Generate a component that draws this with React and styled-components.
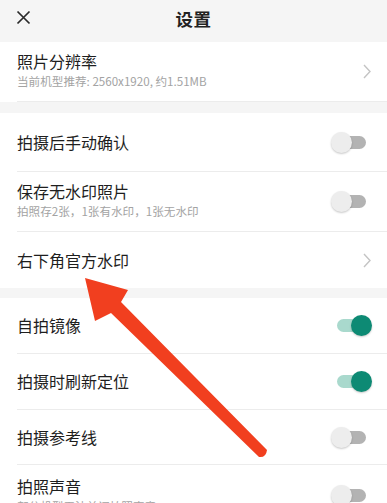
import styled, { createGlobalStyle } from 'styled-components';

const GlobalStyle = createGlobalStyle`
  html, body {
    margin: 0;
    padding: 0;
    background: #f5f5f5;
    font-family: "Noto Sans CJK SC", "Noto Sans", sans-serif;
  }
`;

const Page = styled.div`
  position: relative;
  width: 387px;
  height: 503px;
  overflow: hidden;
  background: #f5f5f5;
`;

const Header = styled.div`
  position: relative;
  height: 36px;
  display: flex;
  align-items: center;
  justify-content: center;
  margin-bottom: 6px;
`;

const CloseBtn = styled.div`
  position: absolute;
  left: 16px;
  top: 10px;
  width: 15px;
  height: 15px;
  display: flex;
`;

const Title = styled.div`
  font-size: 17.5px;
  font-weight: 700;
  color: #222;
  letter-spacing: 0.5px;
`;

const Section = styled.div`
  background: #fff;
  margin-bottom: ${(p) => p.$gap || 0}px;
`;

const Row = styled.div`
  height: ${(p) => p.$h || 55}px;
  margin-left: 17px;
  padding-right: 18px;
  display: flex;
  align-items: center;
  justify-content: space-between;
  border-bottom: ${(p) => (p.$line ? '1px solid #ececec' : 'none')};
`;

const Texts = styled.div`
  display: flex;
  flex-direction: column;
  margin-top: ${(p) => p.$shift || 0}px;
`;

const Label = styled.div`
  font-size: 16px;
  line-height: 21px;
  color: #1e1e1e;
`;

const Sub = styled.div`
  font-size: 11.6px;
  line-height: 17px;
  color: #a3a3a3;
  margin-top: 1px;
`;

const SwitchBox = styled.div`
  position: relative;
  width: 41px;
  height: 21px;
  margin-right: -3px;
`;

const Track = styled.div`
  position: absolute;
  left: 6px;
  right: 6px;
  top: 4px;
  height: 13px;
  border-radius: 7px;
  background: ${(p) => (p.$on ? '#a9d9cd' : '#b3b3b3')};
`;

const Thumb = styled.div`
  position: absolute;
  top: 0;
  ${(p) => (p.$on ? 'right: 0;' : 'left: 0;')}
  width: 21px;
  height: 21px;
  border-radius: 50%;
  background: ${(p) => (p.$on ? '#0d8a74' : '#ededed')};
  box-shadow: 0 1px 2px rgba(0, 0, 0, 0.22);
`;

const Arrow = styled.svg`
  position: absolute;
  left: 0;
  top: 0;
  pointer-events: none;
`;

function Switch({ on }) {
  return (
    <SwitchBox>
      <Track $on={on} />
      <Thumb $on={on} />
    </SwitchBox>
  );
}

function Chevron() {
  return (
    <svg width="8" height="15" viewBox="0 0 8 15" style={{ marginRight: '-2px' }}>
      <path d="M1 1 L7 7.5 L1 14" fill="none" stroke="#c4c4c4" strokeWidth="1.4" />
    </svg>
  );
}

export default function App() {
  return (
    <Page>
      <GlobalStyle />
      <Header>
        <CloseBtn>
          <svg width="15" height="15" viewBox="0 0 15 15">
            <path d="M1.5 1.5 L13.5 13.5 M13.5 1.5 L1.5 13.5" stroke="#2a2a2a" strokeWidth="1.7" />
          </svg>
        </CloseBtn>
        <Title>设置</Title>
      </Header>

      <Section $gap={11}>
        <Row $h={59} $line>
          <Texts $shift={-2}>
            <Label>照片分辨率</Label>
            <Sub>当前机型推荐: 2560x1920, 约1.51MB</Sub>
          </Texts>
          <Chevron />
        </Row>
      </Section>

      <Section $gap={10}>
        <Row $h={58} $line>
          <Label>拍摄后手动确认</Label>
          <Switch />
        </Row>
        <Row $h={59} $line>
          <Texts $shift={-2}>
            <Label>保存无水印照片</Label>
            <Sub>拍照存2张，1张有水印，1张无水印</Sub>
          </Texts>
          <Switch />
        </Row>
        <Row $h={56}>
          <Label>右下角官方水印</Label>
          <Chevron />
        </Row>
      </Section>

      <Section>
        <Row $h={55} $line>
          <Label>自拍镜像</Label>
          <Switch on />
        </Row>
        <Row $h={55} $line>
          <Label>拍摄时刷新定位</Label>
          <Switch on />
        </Row>
        <Row $h={54} $line>
          <Label>拍摄参考线</Label>
          <Switch />
        </Row>
        <Row $h={60}>
          <Texts $shift={1}>
            <Label>拍照声音</Label>
            <Sub>部分机型无法关闭拍照声音</Sub>
          </Texts>
          <Switch />
        </Row>
      </Section>

      <Arrow width="387" height="503" viewBox="0 0 387 503">
        <path
          d="M85 278 L128 290 L121 302 L267 450 Q266 458 259 457 L111 313 L95 321 Z"
          fill="#f13f1f"
        />
      </Arrow>
    </Page>
  );
}
